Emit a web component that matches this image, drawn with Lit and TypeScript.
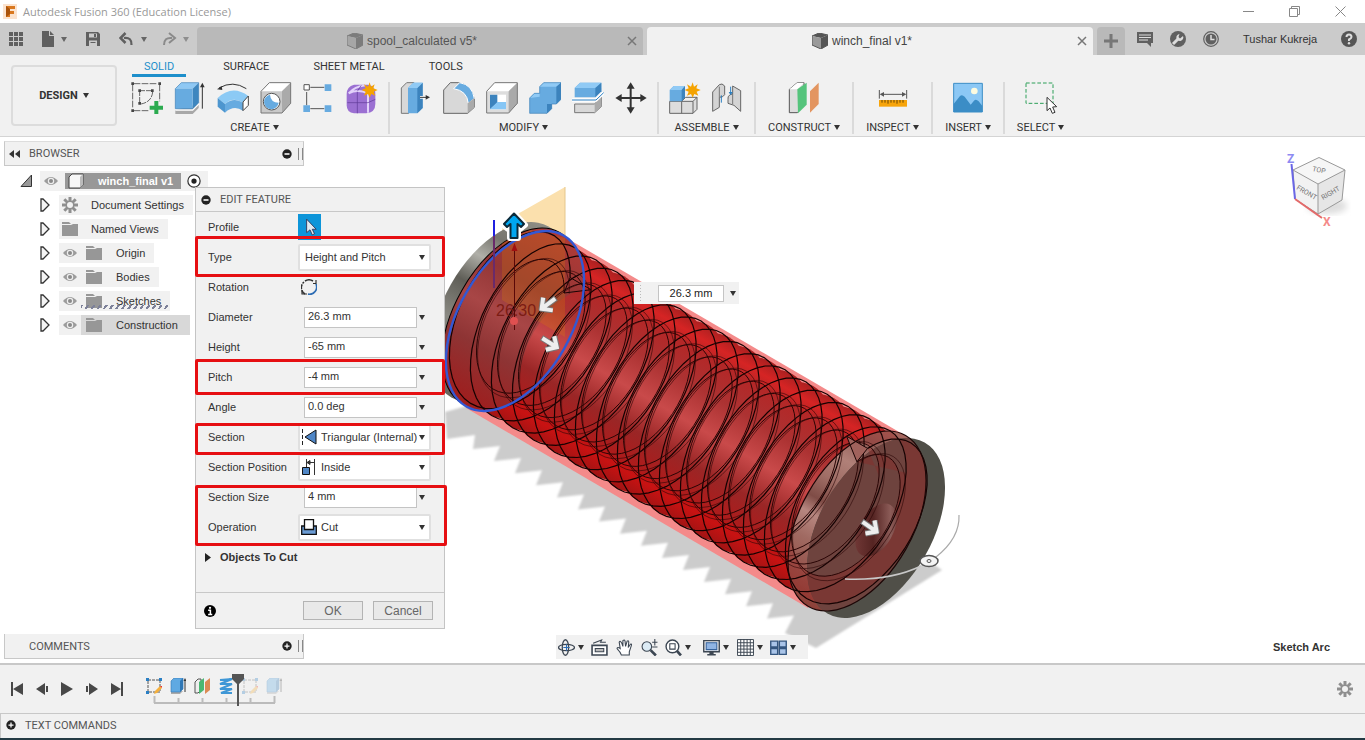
import { LitElement, html, svg, css, nothing } from "lit";
import { customElement, property } from "lit/decorators.js";

type Pt = [number, number];

/* ---------- model geometry ---------- */
const ORIGIN: Pt = [515, 321];
const STEP: Pt = [21, 12.2];
const U: Pt = [48.6, -85.6];
const V: Pt = [49, 27.9];
const TURNS = 16.25;
const START = (46 * Math.PI) / 180;
const OUTER = 0.95;
const INNER = 0.71;

const helixPoint = (s: number, shift: number, r: number): Pt => {
  const a = START - s * Math.PI * 2;
  const c = Math.cos(a) * r;
  const d = Math.sin(a) * r;
  return [
    ORIGIN[0] + (s + shift) * STEP[0] + U[0] * c + V[0] * d,
    ORIGIN[1] + (s + shift) * STEP[1] + U[1] * c + V[1] * d,
  ];
};

const helix = (from: number, to: number, shift: number, r: number) => {
  const pts: string[] = [];
  for (let s = from; s <= to + 0.0001; s += 1 / 48) {
    const p = helixPoint(s, shift, r);
    pts.push(`${p[0].toFixed(1)} ${p[1].toFixed(1)}`);
  }
  return "M" + pts.join("L");
};

const section = (s: number) =>
  [helixPoint(s, -0.5, OUTER), helixPoint(s, 0.5, OUTER), helixPoint(s, 0, INNER)]
    .map((p) => p.map((n) => n.toFixed(1)).join(","))
    .join(" ");

const disc = (cx: number, cy: number, fill: string, stroke = "none", k = 1, w = 1) => svg`
  <ellipse transform="translate(${cx} ${cy}) rotate(-60.4)" rx=${98.4 * k} ry=${56.4 * k}
    fill=${fill} stroke=${stroke} stroke-width=${w}></ellipse>`;

const shadowPath = () => {
  let d = "M445 412L447 439L475 435";
  for (let i = 0; i < 15; i++) {
    const x = 473 + 21 * i;
    const y = 449 + 12.1 * i;
    d += `L${x} ${y.toFixed(1)}L${x + 27} ${(y - 3).toFixed(1)}`;
  }
  return d + "L785 633L816 648L942 570L930 562L808 600L470 405Z";
};

const model = () => {
  const coils = Array.from({ length: 17 }, (_, i) => i);
  return svg`
  <defs>
    <linearGradient id="coil" x1="0" y1="0" x2="1" y2="0">
      <stop offset="0" stop-color="#a01414"></stop><stop offset=".1" stop-color="#c81212"></stop>
      <stop offset=".22" stop-color="#b01818"></stop><stop offset=".36" stop-color="#9a2626"></stop>
      <stop offset=".52" stop-color="#c24040"></stop><stop offset=".68" stop-color="#a62c2c"></stop>
      <stop offset=".82" stop-color="#ac2626"></stop><stop offset=".92" stop-color="#d62424"></stop>
      <stop offset="1" stop-color="#a82020"></stop>
    </linearGradient>
    <linearGradient id="lens" x1="0" y1="0" x2="1" y2="0">
      <stop offset="0" stop-color="#b01a1a"></stop><stop offset=".25" stop-color="#9a2626"></stop>
      <stop offset=".5" stop-color="#c94a4a"></stop><stop offset=".75" stop-color="#ac3232"></stop>
      <stop offset="1" stop-color="#b42626"></stop>
    </linearGradient>
    <linearGradient id="metal" x1="0" y1="0" x2="1" y2="0">
      <stop offset="0" stop-color="#66655e"></stop><stop offset=".35" stop-color="#8a8982"></stop>
      <stop offset=".55" stop-color="#5f5e57"></stop><stop offset=".7" stop-color="#b0afa8"></stop>
      <stop offset=".82" stop-color="#77766e"></stop><stop offset="1" stop-color="#8f8e86"></stop>
    </linearGradient>
    <linearGradient id="face" x1="0" y1="0" x2="1" y2="0">
      <stop offset="0" stop-color="#a01c1c"></stop><stop offset=".3" stop-color="#8e3434"></stop>
      <stop offset=".5" stop-color="#a84646"></stop><stop offset=".7" stop-color="#933636"></stop>
      <stop offset="1" stop-color="#b03a36"></stop>
    </linearGradient>
    <linearGradient id="rim" x1="0" y1="0" x2="1" y2="0">
      <stop offset="0" stop-color="#8d4038"></stop><stop offset=".3" stop-color="#a06a62"></stop>
      <stop offset=".42" stop-color="#b78780"></stop><stop offset=".5" stop-color="#7f4c46"></stop>
      <stop offset=".62" stop-color="#a06e66"></stop><stop offset=".74" stop-color="#b08078"></stop>
      <stop offset=".88" stop-color="#8f5c56"></stop><stop offset="1" stop-color="#a86860"></stop>
    </linearGradient>
    <linearGradient id="bore" x1="0" y1="0" x2="1" y2="1">
      <stop offset="0" stop-color="#7c403e"></stop><stop offset=".45" stop-color="#552422"></stop>
      <stop offset=".75" stop-color="#8c5c58"></stop><stop offset="1" stop-color="#5c2c2a"></stop>
    </linearGradient>
    <clipPath id="endClip">
      <ellipse transform="translate(857 521) rotate(-60.4)" rx="98.4" ry="56.4"></ellipse>
    </clipPath>
    <filter id="soft"><feGaussianBlur stdDeviation="1"></feGaussianBlur></filter>
    <g id="pointer">
      <path d="M-10 0H8M0 -8L8 0L0 8" fill="none" stroke="#777" stroke-width="6" stroke-linejoin="round"></path>
      <path d="M-9 0H7M0 -8L8 0L0 8" fill="none" stroke="#eee" stroke-width="4"></path>
    </g>
  </defs>
  <path d=${shadowPath()} fill="#ccc" filter="url(#soft)"></path>
  <polygon points="565,187 565,260 502,260 502,223" fill="#fbe0ad"></polygon>
  <path d="M565 187V240" stroke="#e5c78c"></path>
  <polygon points="563,236 906,436 808,608 466,408" fill="#f48a8a"></polygon>
  ${disc(500, 312, "url(#metal)")}
  ${disc(511, 318, "url(#face)", "#000")}
  ${coils.map((i) => disc(515 + 21 * i, 321 + 12.2 * i, i < 1 ? "url(#face)" : "url(#coil)", "none", i < 1 ? 1 : OUTER))}
  ${disc(515, 321, "url(#face)")}
  ${coils.slice(3, 16).map((i) => disc(505 + 21 * i, 315 + 12.2 * i, "url(#lens)", "none", 0.7))}
  <polygon points="502,243 530,230 565,238 565,337 502,300" fill="#e08a00" opacity=".22"></polygon>
  ${disc(857, 521, "url(#rim)")}
  ${disc(876, 528, "#504f48")}
  <g clip-path="url(#endClip)">
    ${disc(876, 528, "#6e433e")}
    <path d=${helix(15, 16.25, 0.5, OUTER) + helix(15, 16.25, 0, INNER).replace("M", "L")}
      fill="#a01818" opacity=".25" fill-rule="evenodd"></path>
  </g>
  <ellipse transform="translate(876 530) rotate(-60)" rx="29" ry="17" fill="url(#bore)"></ellipse>
  <path d=${helix(0, TURNS, 0.5, OUTER)} fill="none" stroke="#140202" stroke-width="1.2"></path>
  <path d=${helix(0, 1, -0.5, OUTER)} fill="none" stroke="#140202" stroke-width="1.2"></path>
  <path d=${helix(0, TURNS, 0, INNER)} fill="none" stroke="#2a0505"></path>
  <path d=${helix(0, TURNS, 0.15, INNER + 0.03)} fill="none" stroke="#2a0505" stroke-width=".6"></path>
  <polygon points=${section(0)} fill="none" stroke="#1a0303"></polygon>
  <polygon points=${section(TURNS)} fill="#a0625c" stroke="#1a0303"></polygon>
  ${disc(857, 521, "none", "#1c0606", 1, 1.2)}
  ${disc(515, 321, "none", "#3358d4", 1, 2.4)}
  <path d="M494 220V236" stroke="#2020e0" stroke-width="2"></path>
  <path d="M494 236V288" stroke="#6a2a6a" stroke-width="2"></path>
  <path d="M514.5 244V330" stroke="#5a0808"></path>
  <path d="M514.5 243l-3 8h6z" fill="#a01010"></path>
  <circle cx="514" cy="321" r="4" fill="#e05050"></circle>
  <text class="dim" x="496" y="316">26.30</text>
  <path d="M514 213L525 225L520 229L518 227V238H510V227L508 229L503 225Z" fill="#00a6f0"
    stroke="#fff" stroke-width="6" stroke-linejoin="round"></path>
  <path d="M514 213.500L524 224L521 227L517.500 224V238H510.500V224L507 227L504 224Z" fill="#00a6f0"
    stroke="#0b2a3a" stroke-width="2" stroke-linejoin="round"></path>
  <use href="#pointer" transform="translate(548 304) rotate(143)"></use>
  <use href="#pointer" transform="translate(550 343) rotate(32)"></use>
  <use href="#pointer" transform="translate(870 527) rotate(35)"></use>
  <path d="M845 579Q890 581 921 566" fill="none" stroke="#c8c8c8" stroke-width="1.500"></path>
  <path d="M936 557Q960 538 959 515" fill="none" stroke="#aaa" stroke-width="1.200"></path>
  <ellipse cx="929" cy="561" rx="9" ry="5.500" fill="#f4f4f4" stroke="#555" stroke-width="1.500"></ellipse>
  <ellipse cx="929" cy="561" rx="2" ry="1.500" fill="none" stroke="#555"></ellipse>`;
};

/* ---------- icons ---------- */
const P = "#67abe0";
const star = svg`<path d="M71 1l4 13 11-7-4 12 13 5-12 5 5 12-12-5-5 11-5-11-12 5 5-12-12-5 12-5-5-12 12 7z" fill="#f5a300"></path>`;

const ICONS: Record<string, unknown> = {
  sketch: svg`<g fill="none" stroke="#666" stroke-width="3"><path d="M8 5H80M5 8V80M86 8V58M8 86H52" stroke-dasharray="20 4"></path>
    <path d="M26 26H60M26 26V62M65 30Q62 60 30 66" stroke-dasharray="16 3"></path></g>
    <g fill="#444"><path d="M1 1h8v8H1zM82 1h8v8h-8zM1 82h8v8H1zM22 22h8v8h-8zM60 22h8v8h-8zM22 60h8v8h-8z"></path></g>
    <path d="M70 57h12v14h14v12H82v14H70V83H56V71h14z" fill="#2bab4f"></path>`,
  extrude: svg`<path d="M4 84v12h52l18-18V66z" fill="#a8a8a8"></path><path d="M4 84h52l18-18" stroke="#fff" stroke-width="4" fill="none"></path>
    <path d="M4 20L22 2h52L56 20z" fill="#8ec8f4"></path><path d="M56 20L74 2v60L56 80z" fill="#3d86bf"></path><path d="M4 20h52v60H4z" fill="${P}"></path>
    <path d="M4 80V20L22 2h52v60L56 80z" fill="none" stroke="#3c80b8" stroke-width="2"></path><path d="M85 80V10" stroke="#333" stroke-width="3"></path><path d="M85 2l-7 14h14z" fill="#333"></path>`,
  revolve: svg`<path d="M2 48Q46 6 94 42L78 62Q48 42 24 66z" fill="#8ccaf5"></path><path d="M2 48L24 66V92L2 74z" fill="#4d96cf"></path>
    <path d="M24 66Q50 44 78 62V86Q50 68 24 92z" fill="${P}"></path><path d="M78 60L94 42v28L78 86z" fill="#fff" stroke="#444" stroke-width="3"></path>
    <path d="M6 18Q48-6 88 20" fill="none" stroke="#333" stroke-width="3"></path><path d="M0 22l14-10 2 12z" fill="#333"></path>`,
  hole: svg`<path d="M3 28L28 2h64v62L66 93H3z" fill="#c9c9c9"></path><path d="M3 28L28 2h64L66 28z" fill="#fff"></path><path d="M66 28L92 2v62L66 93z" fill="#aaa"></path>
    <path d="M3 28L28 2h64v62L66 93H3z" fill="none" stroke="#777" stroke-width="3"></path>
    <circle cx="35" cy="59" r="25" fill="#fff" stroke="#555" stroke-width="3"></circle><path d="M30 38Q32 62 56 62A22 22 0 1 1 30 38z" fill="${P}"></path>`,
  pattern: svg`<path d="M22 16H64M11 30V70M22 80H64" stroke="#555" stroke-width="3"></path><path d="M3 8h16v16H3z" fill="#fff" stroke="#555" stroke-width="3"></path>
    <path d="M65 7h20v20H65zM1 70h20v20H1zM65 70h20v20H65z" fill="${P}"></path>`,
  form: svg`<path d="M2 36Q2 14 24 8H66Q88 12 88 36V66Q88 92 60 94H24Q2 92 2 70z" fill="#9b70d2"></path><path d="M8 34Q26 14 58 10M66 40Q80 30 86 20M8 34Q34 20 66 34V92" fill="none" stroke="#e2d2fa" stroke-width="6"></path>
    <path d="M4 62H66L88 52M34 30V94M46 10L34 28" fill="none" stroke="#5d3a96" stroke-width="2"></path>${star}`,
  press: svg`<path d="M4 18L20 2h22v76L26 94H4z" fill="#d8d8d8" stroke="#777" stroke-width="3"></path><path d="M24 18L40 2h28v76L52 94H24z" fill="${P}"></path><path d="M52 18L68 2v76L52 94z" fill="#3c83bd"></path>
    <path d="M24 18L40 2h28L52 18z" fill="#90caf5"></path><path d="M60 46H80" stroke="#fff" stroke-width="8"></path><path d="M60 46H80" stroke="#333" stroke-width="3"></path><path d="M90 46l-13-7v14z" fill="#333"></path>`,
  fillet: svg`<path d="M2 24L22 2H46Q84 6 94 50V76L74 94H2z" fill="#d8d8d8" stroke="#666" stroke-width="3"></path><path d="M32 20L50 2Q88 8 94 50L76 64Q72 26 32 20z" fill="${P}" stroke="#fff" stroke-width="3"></path>
    <path d="M74 94V64L94 48V76z" fill="#aaa"></path>`,
  shell: svg`<path d="M2 28L26 2h68v62L68 93H2z" fill="#ddd"></path><path d="M2 28L26 2h68L68 28z" fill="#fff"></path><path d="M68 28L94 2v62L68 93z" fill="#aaa"></path>
    <path d="M2 28L26 2h68v62L68 93H2z" fill="none" stroke="#777" stroke-width="3"></path><path d="M12 38h48v44H12z" fill="#fff"></path><path d="M12 38h22v24L12 82z" fill="#3c83bd"></path><path d="M34 60h26v22H12z" fill="#86c6f5"></path>`,
  combine: svg`<path d="M2 48L16 34H32V14L44 2H96V52L82 66H68V80L54 94H2z" fill="${P}"></path><path d="M32 14L44 2H96L82 14zM2 48L16 34H32V44z" fill="#90caf5"></path><path d="M82 14L96 2V52L82 66zM54 66h14v14L54 94z" fill="#3c83bd"></path><path d="M2 48L16 34H32V14L44 2H96V52L82 66H68V80L54 94H2z" fill="none" stroke="#3c80b8" stroke-width="2"></path>`,
  split: svg`<path d="M8 66H68L88 44V74L68 92H8z" fill="#d8d8d8" stroke="#777" stroke-width="3"></path><path d="M68 66L88 44V74L68 92z" fill="#aaa"></path><path d="M8 18L24 2H88V28L70 46H8z" fill="${P}"></path><path d="M8 18L24 2H88L70 18z" fill="#90caf5"></path><path d="M70 18L88 2V28L70 46z" fill="#3c83bd"></path>
    <path d="M0 54H72L95 32" fill="none" stroke="#fff" stroke-width="10"></path><path d="M0 54H72L95 32" fill="none" stroke="#2b7fc0" stroke-width="3"></path>`,
  move: svg`<path d="M47 12V84M12 48H84" stroke="#333" stroke-width="6"></path><path d="M47 1L35 20H59zM47 95L35 76H59zM1 48L20 36V60zM95 48L76 36V60z" fill="#333"></path>`,
  component: svg`<path d="M2 58H72L84 46V82L72 94H2z" fill="#ddd" stroke="#666" stroke-width="3"></path><path d="M38 58V94M72 58V94M38 58L50 46H84" fill="none" stroke="#666" stroke-width="3"></path><path d="M2 24L14 12H48V46L38 58H2z" fill="${P}"></path><path d="M2 24L14 12H48L38 24z" fill="#90caf5"></path><path d="M38 24L48 12V46L38 58z" fill="#3c83bd"></path>${star}`,
  joint: svg`<g fill="#d4d4d4" stroke="#666" stroke-width="3"><path d="M2 30L22 8Q30 2 38 12V38Q34 46 22 46V76L2 88z"></path><path d="M86 26L62 12V36L54 38Q46 44 48 52V64L66 70L86 88z"></path></g><path d="M22 14V46M62 36V66" stroke="#777" stroke-width="3"></path><path d="M28 40V62M56 14V36" stroke="#2b7fc0" stroke-width="3"></path><path d="M50 30h12l-6 10z" fill="#2b7fc0"></path>`,
  construct: svg`<path d="M4 22L28 2H48V70L28 92H4z" fill="#ddd" stroke="#555" stroke-width="3"></path><path d="M4 22L28 2H48L28 22z" fill="#fff"></path><path d="M28 22L56 2V68L30 94z" fill="#55c47c"></path><path d="M66 28L92 2V66L66 92z" fill="#e39560"></path>`,
  measure: svg`<path d="M7 24V50M89 24V50M14 37H82" stroke="#555" stroke-width="3"></path><path d="M8 37l13-7v14zM88 37l-13-7v14z" fill="#555"></path><path d="M6 54H90V74H6z" fill="#f7a40a"></path><path d="M15 54v8M24 54v8M33 54v11M42 54v8M51 54v8M60 54v11M69 54v8M78 54v8" stroke="#684400" stroke-width="3"></path>`,
  image: svg`<path d="M5 4H91V90H5z" fill="#8cc8f5"></path><path d="M5 66L24 42Q30 36 38 44L56 68L66 56Q72 50 80 58L91 72V90H5z" fill="#3b8dc6"></path><circle cx="67" cy="27" r="10" fill="#fdfbe0"></circle><path d="M5 4H91V90H5z" fill="none" stroke="#3b8dc6" stroke-width="3"></path>`,
  select: svg`<path d="M3 3H84V64H3z" fill="none" stroke="#2c9f58" stroke-width="3" stroke-dasharray="11 6"></path><path d="M66 46V86L75 78L82 94L90 91L83 75L95 74z" fill="#fff" stroke="#333" stroke-width="3"></path>`,
};

const EYE = svg`<path d="M1 8Q8 0 15 8Q8 16 1 8z" fill="#9c9c9c"></path><circle cx="8" cy="8" r="3.200" fill="#eee"></circle><circle cx="8" cy="8" r="2" fill="#8a8a8a"></circle>`;
const FOLDER = svg`<path d="M0 1h7l2 2H0zM0 4h9l2 -1h5v12H0z" fill="#979797"></path>`;
const GEAR = svg`<path d="M8 0v16M0 8h16M2.300 2.300l11.400 11.400M13.700 2.300L2.300 13.700" stroke="#8f8f8f" stroke-width="3"></path><circle cx="8" cy="8" r="4.500" fill="#8f8f8f"></circle><circle cx="8" cy="8" r="3" fill="#f1f1f1"></circle>`;
const PLUS = svg`<circle cx="8" cy="8" r="7.500" fill="#222"></circle><path d="M8 4v8M4 8h8" stroke="#fff" stroke-width="2"></path>`;
const MINUS = svg`<circle cx="8" cy="8" r="7.500" fill="#222"></circle><path d="M4 8h8" stroke="#fff" stroke-width="2.500"></path>`;
const CUBE = svg`<path d="M0 3L7 0L16 2L9 5z" fill="#555"></path><path d="M0 3L9 5V16L0 12z" fill="#9a9a9a"></path><path d="M9 5L16 2V12L9 16z" fill="#555"></path><path d="M0 3L7 0L16 2V12L9 16L0 12z" fill="none" stroke="#555"></path>`;

const g16 = (size: number, body: unknown, cls = "") =>
  html`<svg class=${cls} width=${size} height=${size} viewBox="0 0 16 16" aria-hidden="true">${body}</svg>`;
const caret = html`<i class="caret"></i>`;

const shared = css`
  * { box-sizing: border-box; }
  button { font: inherit; color: inherit; background: none; border: 0; padding: 0; margin: 0; }
  svg { display: block; flex: none; }
  .caret {
    display: inline-block; flex: none; width: 0; height: 0;
    border: 4px solid transparent; border-top: 5px solid currentColor; border-bottom: 0;
    border-left-width: 3px; border-right-width: 3px;
  }
`;

/* ---------- window chrome ---------- */
@customElement("app-header")
export class AppHeader extends LitElement {
  static styles = [shared, css`
    :host { display: block; }
    .title { height: 23px; display: flex; align-items: center; background: #fff; color: #999; padding-left: 3px; gap: 5px; }
    .title span { font: 11px "Open Sans", "Noto Sans", sans-serif; flex: 1; }
    .win { display: flex; gap: 35px; padding-right: 19px; }
    .bar { height: 32px; display: flex; background: #cbcbcb; color: #666; }
    .quick { width: 197px; display: flex; align-items: center; padding-left: 8px; }
    .quick button { display: flex; align-items: center; gap: 6px; }
    .apps { margin-right: 17px; }
    .file { margin-right: 18px; }
    .save { margin-right: 18px; }
    .undo { margin-right: 14px; }
    .redo { opacity: .6; }
    .tabs { flex: 1; display: flex; gap: 4px; padding-top: 4px; }
    .tab { flex: 1; display: flex; align-items: center; border-radius: 4px 4px 0 0; background: #b9b9b9; color: #555; padding-right: 6px; }
    .tab.on { background: #f1f1f1; color: #444; }
    .tab a { flex: 1; display: flex; align-items: center; justify-content: center; gap: 4px; color: inherit; text-decoration: none; }
    .tab.off a svg { opacity: .6; }
    .add { width: 28px; display: grid; place-items: center; background: #b9b9b9; border-radius: 4px 4px 0 0; }
    .user { width: 240px; display: flex; align-items: center; padding-left: 12px; }
    .user .b { margin-right: 17px; }
    .name { font-size: 11px; color: #333; flex: 1; padding-left: 7px; text-align: left; }
    .help { margin-right: 8px; }
  `];
  render() {
    const x = html`<svg width="10" height="10" viewBox="0 0 10 10"><path d="M1 1l8 8M9 1l-8 8" stroke="#777" stroke-width="1.500"></path></svg>`;
    return html`
      <div class="title">
        <svg width="15" height="16" viewBox="0 0 15 16"><rect width="14" height="15" fill="#fbe3cf"></rect><path d="M3 2H12V5H7V7H11V10H7V13H3z" fill="#d9781f"></path><path d="M3 2l4 3v5l-4 3z" fill="#a9530c"></path></svg>
        <span>Autodesk Fusion 360 (Education License)</span>
        <div class="win">
          <button aria-label="Minimize"><svg width="11" height="11" viewBox="0 0 11 11"><path d="M0 5.500h11" stroke="#888"></path></svg></button>
          <button aria-label="Restore"><svg width="11" height="11" viewBox="0 0 11 11"><path d="M.5 2.500h8v8h-8zM2.500 2.500v-2h8v8h-2" fill="none" stroke="#888"></path></svg></button>
          <button aria-label="Close window"><svg width="11" height="11" viewBox="0 0 11 11"><path d="M.5 .5l10 10M10.500 .5l-10 10" stroke="#888"></path></svg></button>
        </div>
      </div>
      <div class="bar">
        <div class="quick">
          <button class="apps" aria-label="Data panel">${g16(16, svg`<path d="M1 1h4v4H1zM6 1h4v4H6zM11 1h4v4h-4zM1 6h4v4H1zM6 6h4v4H6zM11 6h4v4h-4zM1 11h4v4H1zM6 11h4v4H6zM11 11h4v4h-4z" fill="#606060"></path>`)}</button>
          <button class="file" aria-label="File"><svg width="14" height="16" viewBox="0 0 14 16"><path d="M1 0h7v5h5v11H1zM9 0l4 4H9z" fill="#606060"></path></svg>${caret}</button>
          <button class="save" aria-label="Save">${g16(16, svg`<path d="M1 1h12l2 2v12H1z" fill="#606060"></path><path d="M4 2.500h8v4H4zM4 9.500h8V15H4z" fill="#cbcbcb"></path><path d="M9 3h2v3H9zM5.500 11h5v1h-5z" fill="#606060"></path>`)}</button>
          <button class="undo" aria-label="Undo"><svg width="16" height="14" viewBox="0 0 16 14"><path d="M5 6Q13 5 12.500 13" fill="none" stroke="#606060" stroke-width="2.200"></path><path d="M6.500 1L1.500 6L6.500 11" fill="none" stroke="#606060" stroke-width="2.500"></path></svg>${caret}</button>
          <button class="redo" aria-label="Redo"><svg width="16" height="14" viewBox="0 0 16 14"><path d="M11 6Q3 5 3 13" fill="none" stroke="#606060" stroke-width="2"></path><path d="M8 1L14 6L8 11" fill="none" stroke="#606060" stroke-width="2"></path></svg>${caret}</button>
        </div>
        <div class="tabs">
          <div class="tab off"><a href="#spool">${g16(16, CUBE)}spool_calculated v5*</a><button aria-label="Close spool_calculated">${x}</button></div>
          <div class="tab on"><a href="#winch">${g16(16, CUBE)}winch_final v1*</a><button aria-label="Close winch_final">${x}</button></div>
          <button class="add" aria-label="New design"><svg width="14" height="14" viewBox="0 0 14 14"><path d="M7 0v14M0 7h14" stroke="#777" stroke-width="3"></path></svg></button>
        </div>
        <div class="user">
          <button class="b" aria-label="Notifications">${g16(16, svg`<path d="M0 1h16v11h-2v4l-4-4H0z" fill="#606060"></path><path d="M2 4h12M2 6.500h12M2 9h9" stroke="#ddd"></path>`)}</button>
          <button class="b" aria-label="Extensions">${g16(16, svg`<circle cx="8" cy="8" r="8" fill="#606060"></circle><path d="M3 13L8 8" stroke="#ddd" stroke-width="3"></path><path d="M13 5A3.500 3.500 0 1 1 9.500 3L8.500 6L10 7.500z" fill="#ddd"></path>`)}</button>
          <button class="b" aria-label="Job status">${g16(16, svg`<circle cx="8" cy="8" r="7.300" fill="none" stroke="#606060" stroke-width="1.200"></circle><circle cx="8" cy="8" r="5.500" fill="#606060"></circle><path d="M8 4v4.500h3.500" fill="none" stroke="#ddd" stroke-width="1.500"></path>`)}</button>
          <button class="name">Tushar Kukreja</button>
          <button class="help" aria-label="Help">${g16(16, svg`<circle cx="8" cy="8" r="8" fill="#555"></circle><path d="M5.500 6Q5.500 3.500 8 3.500T10.500 6Q10.500 7.200 8 8.500V10" fill="none" stroke="#ddd" stroke-width="2"></path><circle cx="8" cy="12.300" r="1.200" fill="#ddd"></circle>`)}</button>
        </div>
      </div>`;
  }
}

const GROUPS: [string, string[], string][] = [
  ["CREATE", ["sketch", "extrude", "revolve", "hole", "pattern", "form"], "many"],
  ["MODIFY", ["press", "fillet", "shell", "combine", "split", "move"], "many"],
  ["ASSEMBLE", ["component", "joint"], "many"],
  ["CONSTRUCT", ["construct"], ""],
  ["INSPECT", ["measure"], ""],
  ["INSERT", ["image"], ""],
  ["SELECT", ["select"], ""],
];

@customElement("app-ribbon")
export class AppRibbon extends LitElement {
  static styles = [shared, css`
    :host { display: flex; height: 82px; background: #f1f1f1; border-bottom: 1px solid #d4d4d4; color: #333; font-family: Roboto, sans-serif; font-size: 11px; }
    .design { width: 106px; height: 61px; margin: 10px 4px 0 11px; border: 2px solid #dcdcdc; border-radius: 4px; display: flex; align-items: center; justify-content: center; gap: 5px; font-weight: 700; }
    .main { flex: 1; display: flex; flex-direction: column; }
    .tabs { display: flex; padding-left: 11px; height: 22px; }
    .tabs a { color: #333; text-decoration: none; padding-top: 5px; line-height: 13px; border-bottom: 3px solid transparent; margin-left: 44px; }
    .tabs .on { color: #1d8fcb; border-color: #1d8fcb; padding: 5px 12px 0; margin: 0 -7px 0 0; }
    .groups { display: flex; padding-top: 5px; }
    .group { padding: 0 12px; border-right: 2px solid #dadada; height: 52px; display: flex; flex-direction: column; align-items: center; justify-content: space-between; }
    .group.many { padding: 0 10px; }
    .group:last-child { border: 0; }
    .icons { display: flex; gap: 11px; }
    .label { display: flex; align-items: center; gap: 3px; line-height: 13px; white-space: nowrap; }
  `];
  render() {
    return html`
      <button class="design">DESIGN ${caret}</button>
      <div class="main">
        <nav class="tabs"><a class="on" href="#solid">SOLID</a><a href="#surface">SURFACE</a><a href="#sheet">SHEET METAL</a><a href="#tools">TOOLS</a></nav>
        <div class="groups">
          ${GROUPS.map(([name, icons, cls]) => html`<div class="group ${cls}">
            <div class="icons">${icons.map((i) => html`<button aria-label=${i}><svg width="32" height="32" viewBox="0 0 96 96">${ICONS[i]}</svg></button>`)}</div>
            <button class="label">${name} ${caret}</button>
          </div>`)}
        </div>
      </div>`;
  }
}

/* ---------- browser tree ---------- */
@customElement("browser-panel")
export class BrowserPanel extends LitElement {
  static styles = [shared, css`
    :host { display: block; width: 300px; font-size: 11px; color: #333; }
    .head { height: 25px; display: flex; align-items: center; background: #f1f1f1; border: 1px solid #c8c8c8; border-top-color: #ddd; color: #555; padding-left: 4px; font-family: Roboto, sans-serif; }
    .head span { flex: 1; padding-left: 9px; }
    .head .grip { width: 5px; height: 12px; border: solid #888; border-width: 0 1px; margin-left: 6px; }
    .tree { padding-top: 5px; }
    .row { display: flex; align-items: center; height: 20px; margin-bottom: 4px; padding-left: 35px; }
    .row.root { padding-left: 16px; }
    .arrow { width: 20px; }
    .body { height: 20px; display: flex; align-items: center; background: #f1f1f1; }
    .root .body { width: 168px; }
    .body svg { margin: 0 3px; }
    .hl { height: 100%; display: flex; align-items: center; padding-right: 9px; position: relative; }
    .hl span { padding-left: 10px; }
    .nested { padding-left: 2px; }
    .nested span { padding-left: 11px; }
    .hl.sel { background: #d8d8d8; padding-right: 12px; }
    .root .hl { background: #989898; color: #fff; font-weight: 700; height: 16px; padding-right: 8px; margin: 0 3px; }
    .root .hl span { padding-left: 11px; }
    .hatch::after { content: ""; position: absolute; left: 0; right: 2px; bottom: 2px; height: 4px; background: repeating-linear-gradient(125deg, #7d8199 0 2px, transparent 2px 5px); }
  `];
  render() {
    const tri = html`<svg class="arrow" width="20" height="14" viewBox="0 0 20 14"><path d="M2 1V13H4L10 7L4 1z" fill="#f4f4f4" stroke="#333" stroke-width="1.300"></path></svg>`;
    const rows: [string, boolean, string][] = [
      ["Origin", true, ""], ["Bodies", true, ""], ["Sketches", true, "hatch"], ["Construction", true, "sel"],
    ];
    return html`
      <div class="head"><svg width="11" height="8" viewBox="0 0 11 8"><path d="M5 0v8L0 4zM11 0v8L6 4z" fill="#333"></path></svg><span>BROWSER</span>${g16(10, MINUS)}<i class="grip"></i></div>
      <div class="tree">
        <div class="row root"><svg width="20" height="14" viewBox="0 0 20 14"><path d="M1 12.500H11.500V1z" fill="#999" stroke="#333"></path></svg>
          <div class="body">${g16(16, EYE)}<div class="hl">${g16(16, svg`<path d="M1 4L4 1H15V12L12 15H1z" fill="#f6f6f6" stroke="#444"></path><path d="M12 4L15 1V12L12 15z" fill="#bbb"></path>`)}<span>winch_final v1</span></div>${g16(14, svg`<circle cx="8" cy="8" r="7" fill="#fff" stroke="#333" stroke-width="1.400"></circle><circle cx="8" cy="8" r="3" fill="#222"></circle>`)}</div></div>
        <div class="row">${tri}<div class="body"><div class="hl">${g16(16, GEAR)}<span>Document Settings</span></div></div></div>
        <div class="row">${tri}<div class="body"><div class="hl">${g16(16, FOLDER)}<span>Named Views</span></div></div></div>
        ${rows.map(([t, eye, cls]) => html`<div class="row">${tri}<div class="body">${eye ? g16(16, EYE) : nothing}<div class="hl nested ${cls}">${g16(16, FOLDER)}<span>${t}</span></div></div></div>`)}
      </div>`;
  }
}

/* ---------- edit feature dialog ---------- */
@customElement("feature-dialog")
export class FeatureDialog extends LitElement {
  @property({ type: String }) heading = "EDIT FEATURE";
  static styles = [shared, css`
    :host { display: block; width: 250px; background: #f1f1f1; border: 1px solid #c4c4c4; font-size: 11px; color: #333; }
    .head { height: 24px; display: flex; align-items: center; gap: 9px; padding-left: 5px; border-bottom: 1px solid #c8c8c8; color: #555; font-family: Roboto, sans-serif; }
    .row { height: 30px; display: grid; grid-template-columns: 90px 1fr; align-items: center; padding-left: 12px; }
    .pick { width: 23px; height: 26px; background: #0d95d9; display: grid; place-items: center; }
    .rot { padding-left: 3px; }
    .num { display: flex; align-items: center; gap: 2px; padding-left: 6px; }
    .num input { width: 113px; height: 21px; border: 1px solid #c4c4c4; background: #fff; padding: 0 3px 2px; font: inherit; color: inherit; }
    .sel { position: relative; width: 133px; height: 27px; }
    .sel select { width: 100%; height: 100%; appearance: none; border: 2px solid #e0e0e0; border-radius: 2px; background: #fff; font: inherit; color: inherit; padding: 0 0 0 5px; }
    .sel .withicon { padding-left: 21px; }
    .sel svg { position: absolute; left: 3px; top: 5px; }
    .sel .caret { position: absolute; right: 6px; top: 11px; }
    .objects { height: 30px; display: flex; align-items: center; gap: 9px; padding-left: 9px; font-weight: 700; }
    .foot { margin-top: 20px; height: 36px; border-top: 1px solid #c8c8c8; display: flex; align-items: center; padding: 0 11px 0 8px; gap: 10px; font-size: 12px; color: #666; }
    .foot button { width: 60px; height: 19px; border: 1px solid #b4b4b4; background: #e9e9e9; }
    .foot .gap { flex: 1; }
    .mark { position: absolute; left: -1px; right: -1px; border: 3px solid #e60f12; border-radius: 2px; pointer-events: none; }
    .m1 { top: 48px; height: 41px; }
    .m2 { top: 171px; height: 36px; }
    .m3 { top: 235px; height: 32px; }
    .m4 { top: 297px; height: 61px; right: -3px; }
  `];
  private num(id: string, label: string, value: string) {
    return html`<div class="row"><label for=${id}>${label}</label><div class="num"><input id=${id} .value=${value} />${caret}</div></div>`;
  }
  private pick(id: string, label: string, value: string, icon?: unknown) {
    return html`<div class="row"><label for=${id}>${label}</label><div class="sel">
      <select id=${id} class=${icon ? "withicon" : ""}><option>${value}</option></select>${icon ? g16(16, icon) : nothing}${caret}</div></div>`;
  }
  render() {
    return html`
      <div class="head">${g16(10, MINUS)}<span>${this.heading}</span></div>
      <div class="row"><span>Profile</span><button class="pick" aria-label="Select profile">${g16(18, svg`<path d="M5 1V13L8 10.500L10 15L12 14L10 10H13.500z" fill="#dfeaf2" stroke="#335" stroke-width=".8"></path>`)}</button></div>
      ${this.pick("type", "Type", "Height and Pitch")}
      <div class="row"><span>Rotation</span><button class="rot" aria-label="Flip rotation">${g16(16, svg`<path d="M4 15A7.300 7.300 0 0 1 3 3" fill="none" stroke="#333" stroke-width="1.600" stroke-dasharray="5 1"></path><path d="M4 2Q8 -.5 12 2" fill="none" stroke="#333" stroke-width="1.500"></path><path d="M15 5A7.300 7.300 0 0 1 7 15.200" fill="none" stroke="#2d6db4" stroke-width="1.700"></path><path d="M1 11v4h5M12 4.500h3V1" fill="none" stroke="#333" stroke-width="1.200"></path>`)}</button></div>
      ${this.num("dia", "Diameter", "26.3 mm")}
      ${this.num("height", "Height", "-65 mm")}
      ${this.num("pitch", "Pitch", "-4 mm")}
      ${this.num("angle", "Angle", "0.0 deg")}
      ${this.pick("section", "Section", "Triangular (Internal)", svg`<path d="M1.500 0v16" stroke="#222" stroke-dasharray="4 2"></path><path d="M15 1V15L4 8z" fill="#4f86c6" stroke="#111"></path>`)}
      ${this.pick("pos", "Section Position", "Inside", svg`<path d="M5.500 0v8M13.500 0v16" stroke="#333"></path><path d="M6 3.500h7M6 3.500l3-2v4z" stroke="#333" fill="#333"></path><path d="M1.500 8.500h7v7h-7z" fill="#4f86c6" stroke="#111"></path>`)}
      ${this.num("size", "Section Size", "4 mm")}
      ${this.pick("op", "Operation", "Cut", svg`<path d="M.7 7H15.300V15.300H.7z" fill="#6a9bd4" stroke="#111" stroke-width="1.300"></path><path d="M3.500 .7H12.500V10.500H3.500z" fill="#fff" stroke="#111" stroke-width="1.300"></path>`)}
      <div class="objects"><svg width="6" height="9" viewBox="0 0 6 9"><path d="M0 0L6 4.500L0 9z" fill="#222"></path></svg>Objects To Cut</div>
      <div class="foot">${g16(12, svg`<circle cx="8" cy="8" r="8" fill="#000"></circle><path d="M5.500 7H8.500V12M5.500 12.500H11" fill="none" stroke="#fff" stroke-width="2"></path><circle cx="8" cy="3.800" r="1.500" fill="#fff"></circle>`)}<i class="gap"></i><button>OK</button><button>Cancel</button></div>
      <i class="mark m1"></i><i class="mark m2"></i><i class="mark m3"></i><i class="mark m4"></i>`;
  }
}

/* ---------- timeline ---------- */
@customElement("time-line")
export class TimeLine extends LitElement {
  static styles = [shared, css`
    :host { display: flex; height: 50px; background: #f1f1f1; border-top: 2px solid #c8c8c8; align-items: center; padding: 0 12px 0 10px; }
    .play { display: flex; gap: 11px; }
    .track { position: relative; margin: 2px auto 0 18px; padding-top: 2px; }
    .items { display: flex; gap: 8px; padding: 0 4px; }
    .items .dimmed { opacity: .3; }
    .rail { margin-top: 2px; }
    .marker { position: absolute; left: 90px; top: -2px; }
  `];
  render() {
    const b = (label: string, d: string) => html`<button aria-label=${label}><svg width="14" height="14" viewBox="0 0 14 14"><path d=${d} fill="#484848"></path></svg></button>`;
    const edit = svg`<path d="M2 2H14V14H2z" fill="none" stroke="#555" stroke-dasharray="3 1"></path><path d="M0 0h3v3H0zM13 0h3v3h-3zM0 13h3v3H0z" fill="#2a7fc4"></path><path d="M8 16l1-3 5-5 2 2-5 5z" fill="#f5b03c"></path><path d="M14 8l2 2V8z" fill="#e33"></path>`;
    const ext = svg`<path d="M1 13v3h9l3-3" fill="#aaa"></path><path d="M1 3l3-3h9v11l-3 3H1z" fill="#5fa9e2" stroke="#2f77b5" stroke-width=".6"></path><path d="M10 3l3-3v11l-3 3z" fill="#2f77b5"></path><path d="M15 14V2" stroke="#333"></path><path d="M15 0l-1.500 3h3z" fill="#333"></path>`;
    const icon = (body: unknown, cls = "") => html`<button class=${cls} aria-label="Timeline feature">${g16(16, body)}</button>`;
    return html`
      <div class="play">
        ${b("Go to beginning", "M1 0h2v14H1zM13 1v12L3 7z")}${b("Step back", "M10 1v12L1 7zM11 4h2v6h-2z")}
        ${b("Play", "M1 0L13 7L1 14z")}${b("Step forward", "M4 1v12l9-6zM1 4h2v6H1z")}${b("Go to end", "M13 0h-2v14h2zM1 1v12l10-6z")}
      </div>
      <div class="track">
        <div class="items">
          ${icon(edit)}${icon(ext)}
          ${icon(svg`<path d="M1 4L4 1h3v11l-3 3H1z" fill="#eee" stroke="#555"></path><path d="M5 4l5-4v12l-5 4z" fill="#4bb872"></path><path d="M11 4l5-4v12l-5 4z" fill="#dc8a54"></path>`)}
          ${icon(svg`<path d="M2 2l12-1L2 6l12 0L2 11h12L3 15h11" fill="none" stroke="#3f97d6" stroke-width="2"></path>`)}
          ${icon(edit, "dimmed")}${icon(ext, "dimmed")}
        </div>
        <svg class="rail" width="144" height="8" viewBox="0 0 144 8"><path d="M12.500 0V7M36.500 2V7M60.500 2V7M84.500 2V7M108.500 2V7M132.500 0V7M12 7H133" fill="none" stroke="#bbb" stroke-width="2"></path></svg>
        <svg class="marker" width="12" height="32" viewBox="0 0 12 32"><path d="M0 0H12V5L7 10V32H5V10L0 5z" fill="#555"></path></svg>
      </div>
      <button aria-label="Timeline settings">${g16(16, GEAR)}</button>`;
  }
}

@customElement("app-root")
export class AppRoot extends LitElement {
  static styles = [shared, css`
    :host { display: flex; flex-direction: column; height: 100vh; overflow: hidden; background: #fff; font: 12px "Liberation Sans", Arial, sans-serif; color: #333; }
    .canvas { flex: 1; position: relative; min-height: 0; overflow: hidden; }
    .scene { position: absolute; inset: 0; width: 100%; height: 100%; }
    .dim { font: 16px "Liberation Sans", Arial, sans-serif; fill: #7c1c14; }
    .browser { position: absolute; left: 4px; top: 4px; }
    .dialog { position: absolute; left: 195px; top: 50px; }
    .value { position: absolute; left: 634px; top: 145px; height: 22px; display: flex; align-items: center; gap: 6px; padding: 0 3px 0 5px; background: #f1f1f1; }
    .value .drag { width: 4px; height: 18px; background: radial-gradient(#bbb 1px, transparent 1px) 0 0 / 3px 3px; margin-right: 9px; }
    .value input { width: 66px; height: 17px; border: 1px solid #c4c4c4; background: #fff; text-align: center; font: 11px "Liberation Sans", Arial, sans-serif; padding: 0; color: #222; }
    .cube { position: absolute; right: 12px; top: 12px; }
    .cube text { font: 7px Roboto, sans-serif; fill: #777; }
    .cube .ax { font-size: 12px; font-weight: 700; }
    .cube .z { fill: #8d8af2; }
    .cube .x { fill: #f58a8a; }
    .comments { position: absolute; left: 4px; bottom: 4px; width: 300px; height: 25px; display: flex; align-items: center; padding-left: 24px; background: #f1f1f1; border: solid #c8c8c8; border-width: 0 1px 1px; color: #555; font: 11px Roboto, sans-serif; }
    .comments span { flex: 1; }
    .comments i { width: 5px; height: 12px; border: solid #888; border-width: 0 1px; margin-left: 6px; }
    .nav { position: absolute; left: 50%; bottom: 4px; width: 252px; margin-left: -127px; height: 24px; display: flex; align-items: center; background: #f1f1f1; padding: 0 11px 0 2px; justify-content: space-between; }
    .nav button { display: flex; align-items: center; gap: 3px; }
    .nav .wide { margin-right: 4px; }
    .hint { position: absolute; right: 35px; bottom: 10px; font-weight: 700; font-size: 11px; }
    .cmd { height: 25px; display: flex; align-items: center; gap: 9px; padding: 0 0 2px 5px; background: #f1f1f1; border: solid #c8c8c8; border-width: 1px 0 0 1px; color: #555; font: 11px Roboto, sans-serif; }
    .edge { height: 2px; background: #233a44; }
  `];
  render() {
    const k = "#3c4652";
    return html`
      <app-header></app-header>
      <app-ribbon></app-ribbon>
      <main class="canvas">
        <svg class="scene" viewBox="0 137 1365 526" preserveAspectRatio="xMinYMin slice" role="img" aria-label="Threaded winch drum">${model()}</svg>
        <browser-panel class="browser"></browser-panel>
        <feature-dialog class="dialog"></feature-dialog>
        <div class="value"><i class="drag"></i><input aria-label="Diameter" .value=${"26.3 mm"} />${caret}</div>
        <svg class="cube" width="70" height="80" viewBox="1283 149 70 80">
          <filter id="b"><feGaussianBlur stdDeviation="3"></feGaussianBlur></filter>
          <ellipse cx="1327" cy="206" rx="20" ry="8" fill="#ddd" filter="url(#b)"></ellipse>
          <path d="M1293 170L1319 157.500L1345 170L1318 184z" fill="#f6f6f6"></path>
          <path d="M1293 170L1318 184V214L1295 199z" fill="#f2f2f2"></path>
          <path d="M1318 184L1345 170L1342 200L1318 214z" fill="#e6e6e6"></path>
          <path d="M1293 170L1319 157.500L1345 170L1342 200L1318 214L1295 199zM1293 170L1318 184L1345 170M1318 184V214" fill="none" stroke="#999"></path>
          <path d="M1291.500 164L1295 199" stroke="#6a66e6" stroke-width="2"></path><path d="M1295 199L1322 218" stroke="#e46a6a" stroke-width="2"></path>
          <text class="ax z" x="1287" y="163">Z</text><text class="ax x" x="1323" y="226">X</text>
          <text transform="translate(1312 171) rotate(12)">TOP</text>
          <text transform="translate(1296 189) rotate(30)">FRONT</text>
          <text transform="translate(1323 200) rotate(-30)">RIGHT</text>
        </svg>
        <div class="comments"><span>COMMENTS</span>${g16(10, PLUS)}<i></i></div>
        <div class="nav">
          <button aria-label="Orbit">${g16(17, svg`<ellipse cx="8" cy="8" rx="7.500" ry="3" fill="none" stroke=${k} stroke-width="1.200"></ellipse><ellipse cx="7" cy="8" rx="3" ry="7.300" fill="none" stroke=${k} stroke-width="1.200"></ellipse><path d="M8 5v6M5 8h6" stroke="#2d6db4"></path>`)}${caret}</button>
          <button aria-label="Look at">${g16(17, svg`<path d="M1 6h14v9H1z" fill="#fff" stroke=${k} stroke-width="1.500"></path><path d="M4 9h8v3H4z" fill="#bbb" stroke=${k}></path><path d="M2 4L10 1L9 3H14" fill="none" stroke=${k}></path>`)}</button>
          <button aria-label="Pan">${g16(17, svg`<path d="M5 15Q4 12 1 9Q1 7 4 9L3 3Q4 1 5.500 4L6.500 7L6.500 1.500Q8 0 8.500 2L9 7L10.500 2Q12 1 12 3L11.500 8L13.500 5Q15 4 14.500 6L12.500 12V15z" fill="#fff" stroke=${k}></path>`)}</button>
          <button aria-label="Zoom">${g16(17, svg`<circle cx="5.500" cy="7" r="4.500" fill="#dcebf5" stroke=${k}></circle><path d="M9 10.500L14 15.500" stroke=${k} stroke-width="2.500"></path><path d="M13 0v6M10.500 3h5M10.500 7.500h5" stroke=${k}></path>`)}</button>
          <button class="wide" aria-label="Fit">${g16(17, svg`<circle cx="7" cy="7" r="6" fill="#fff" stroke=${k} stroke-width="1.300"></circle><path d="M4.500 4.500h5v5h-5z" fill="none" stroke=${k}></path><path d="M11 11L15 15.500" stroke=${k} stroke-width="2.500"></path>`)}${caret}</button>
          <button aria-label="Display settings">${g16(17, svg`<path d="M.7 1.500H15.300V12H.7z" fill="#eee" stroke=${k} stroke-width="1.300"></path><path d="M3 3.500h10v6.500H3z" fill="#8fb4e4" stroke="#35629c"></path><path d="M6 12h4v2h2v1.500H4V14h2z" fill=${k}></path>`)}${caret}</button>
          <button aria-label="Grid settings">${g16(17, svg`<path d="M.5 .5h15v15H.5zM3.500 0v16M6.500 0v16M9.500 0v16M12.500 0v16M0 3.500h16M0 6.500h16M0 9.500h16M0 12.500h16" fill="#fff" stroke=${k} stroke-width=".9"></path>`)}${caret}</button>
          <button aria-label="Viewports">${g16(17, svg`<path d="M.7 2h6.500v5.500H.7zM8.800 2h6.500v5.500H8.800zM.7 9h6.500v5.500H.7zM8.800 9h6.500v5.500H8.800z" fill="#a9c4e8" stroke="#34567f" stroke-width="1.300"></path>`)}${caret}</button>
        </div>
        <div class="hint">Sketch Arc</div>
      </main>
      <time-line></time-line>
      <div class="cmd">${g16(10, PLUS)}<span>TEXT COMMANDS</span></div>
      <div class="edge"></div>`;
  }
}
